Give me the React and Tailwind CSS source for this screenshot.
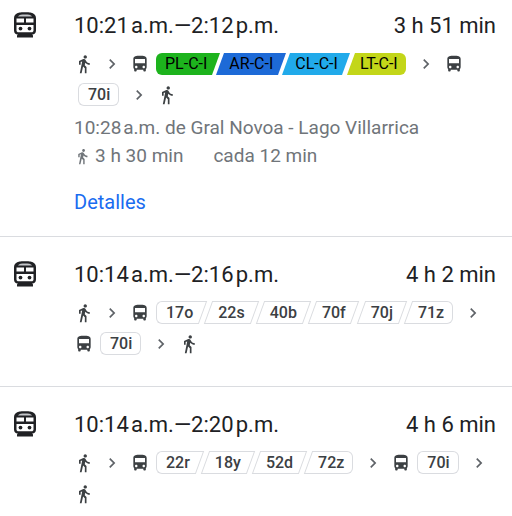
import clsx from "clsx";
import {
  MdChevronRight,
  MdDirectionsBus,
  MdDirectionsWalk,
} from "react-icons/md";

const trips = [
  {
    id: 1,
    time: "10:21\u200aa.m.—2:12\u200ap.m.",
    duration: "3 h 51 min",
    legs: [
      { type: "walk" },
      { type: "next" },
      { type: "bus" },
      {
        type: "lines",
        lines: [
          { name: "PL-C-I", color: "before:bg-[#1db31d] after:bg-[#1db31d]" },
          { name: "AR-C-I", color: "before:bg-[#1d6ad7] after:bg-[#1d6ad7]" },
          { name: "CL-C-I", color: "before:bg-[#21aaea] after:bg-[#21aaea]" },
          { name: "LT-C-I", color: "before:bg-[#c3d619] after:bg-[#c3d619]" },
        ],
      },
      { type: "next" },
      { type: "bus" },
      { type: "lines", lines: [{ name: "70i" }] },
      { type: "next" },
      { type: "walk" },
    ],
    departure: "10:28\u200aa.m. de Gral Novoa - Lago Villarrica",
    walking: "3 h 30 min",
    frequency: "cada 12 min",
  },
  {
    id: 2,
    time: "10:14\u200aa.m.—2:16\u200ap.m.",
    duration: "4 h 2 min",
    legs: [
      { type: "walk" },
      { type: "next" },
      { type: "bus" },
      {
        type: "lines",
        lines: [
          { name: "17o" },
          { name: "22s" },
          { name: "40b" },
          { name: "70f" },
          { name: "70j" },
          { name: "71z" },
        ],
      },
      { type: "next" },
      { type: "bus" },
      { type: "lines", lines: [{ name: "70i" }] },
      { type: "next" },
      { type: "walk" },
    ],
  },
  {
    id: 3,
    time: "10:14\u200aa.m.—2:20\u200ap.m.",
    duration: "4 h 6 min",
    legs: [
      { type: "walk" },
      { type: "next" },
      { type: "bus" },
      {
        type: "lines",
        lines: [
          { name: "22r" },
          { name: "18y" },
          { name: "52d" },
          { name: "72z" },
        ],
      },
      { type: "next" },
      { type: "bus" },
      { type: "lines", lines: [{ name: "70i" }] },
      { type: "next" },
      { type: "walk" },
    ],
  },
];

function TrainIcon() {
  return (
    <svg width="22" height="26" viewBox="0 0 22 26" aria-hidden="true">
      <path
        fill="#202124"
        fillRule="evenodd"
        d="M5.5 0.5C7 0.1 15 0.1 16.500 0.500C20 1.200 22 3 22 6V18.500C22 21 20.400 22.600 18.200 22.600L19 23.600V25.500H3V23.600L3.800 22.600C1.600 22.600 0 21 0 18.500V6C0 3 2 1.200 5.500 0.500ZM2.500 6.500V10.500H10V6.500ZM12 6.500V10.500H19.500V6.500ZM2.500 13V18.500C2.500 19.600 3.300 20.300 4.400 20.300H17.600C18.700 20.300 19.500 19.600 19.500 18.500V13Z"
      />
      <path fill="#c4c6c9" d="M4 4.600C5 2.900 7.500 2.600 11 2.600S17 2.900 18 4.600Z" />
      <circle cx="6.500" cy="16.600" r="1.900" fill="#202124" />
      <circle cx="15.500" cy="16.600" r="1.900" fill="#202124" />
    </svg>
  );
}

// The chip is drawn by two overlapping pseudo-elements, so only the
// sides that touch another chip get slanted.
function LineChip({ line, first, last }) {
  return (
    <span
      className={clsx(
        "relative isolate text-base whitespace-nowrap",
        "before:absolute before:inset-y-0 before:left-0 before:-z-10 before:w-3/5",
        "after:absolute after:inset-y-0 after:right-0 after:-z-10 after:w-3/5",
        first ? "before:rounded-l-md" : "before:-skew-x-20",
        last ? "after:rounded-r-md" : "after:-skew-x-20",
        line.color
          ? ["h-[22px] pr-2 pl-[9px] leading-[22px] text-black", line.color]
          : "h-[23px] pl-[10px] leading-[23px] font-medium text-[#3c4043] before:border before:border-r-0 before:border-[#dadce0] after:border after:border-l-0 after:border-[#dadce0]",
        !line.color && (last ? "pr-[9px]" : "pr-[10px]")
      )}
    >
      {line.name}
    </span>
  );
}

function Leg({ leg }) {
  if (leg.type === "next") {
    return (
      <span className="flex h-[31px] w-9 items-center justify-center text-[#5f6368]">
        <MdChevronRight size={20} />
      </span>
    );
  }

  if (leg.type === "lines") {
    return (
      <span className="mr-0.5 ml-1 flex h-[31px] items-center gap-[5px]">
        {leg.lines.map((line, idx) => (
          <LineChip
            key={line.name}
            line={line}
            first={idx === 0}
            last={idx === leg.lines.length - 1}
          />
        ))}
      </span>
    );
  }

  return (
    <span
      className={clsx(
        "flex h-[31px] items-center text-[#3c4043]",
        leg.type === "bus" && "mr-0.5"
      )}
    >
      {leg.type === "bus" ? (
        <MdDirectionsBus size={20} />
      ) : (
        <MdDirectionsWalk size={20} />
      )}
    </span>
  );
}

function Trip({ trip }) {
  return (
    <li className="flex border-b border-[#dadce0] pt-6 pr-4 pb-[27px] pl-[14px] first:pt-3 first:pb-5 last:border-b-0">
      <div className="w-[60px] shrink-0">
        <TrainIcon />
      </div>

      <div className="min-w-0 flex-1">
        <div className="flex justify-between text-[22px] leading-7 text-[#202124]">
          <h2>{trip.time}</h2>
          <span>{trip.duration}</span>
        </div>

        <div className="mt-2 -mr-2 flex flex-wrap">
          {trip.legs.map((leg, idx) => (
            <Leg key={idx} leg={leg} />
          ))}
        </div>

        {trip.departure && (
          <div className="mt-1 text-[19px] leading-7 text-[#70757a]">
            <p>{trip.departure}</p>
            <p className="flex items-center">
              <MdDirectionsWalk size={17} className="mr-1" />
              <span className="mr-[30px]">{trip.walking}</span>
              <span>{trip.frequency}</span>
            </p>
            <button
              type="button"
              className="mt-[18px] block text-xl leading-7 text-[#1a6cf0]"
            >
              Detalles
            </button>
          </div>
        )}
      </div>
    </li>
  );
}

export default function App() {
  return (
    <main className="min-h-screen bg-white font-[Roboto,sans-serif]">
      <ul>
        {trips.map((trip) => (
          <Trip key={trip.id} trip={trip} />
        ))}
      </ul>
    </main>
  );
}
